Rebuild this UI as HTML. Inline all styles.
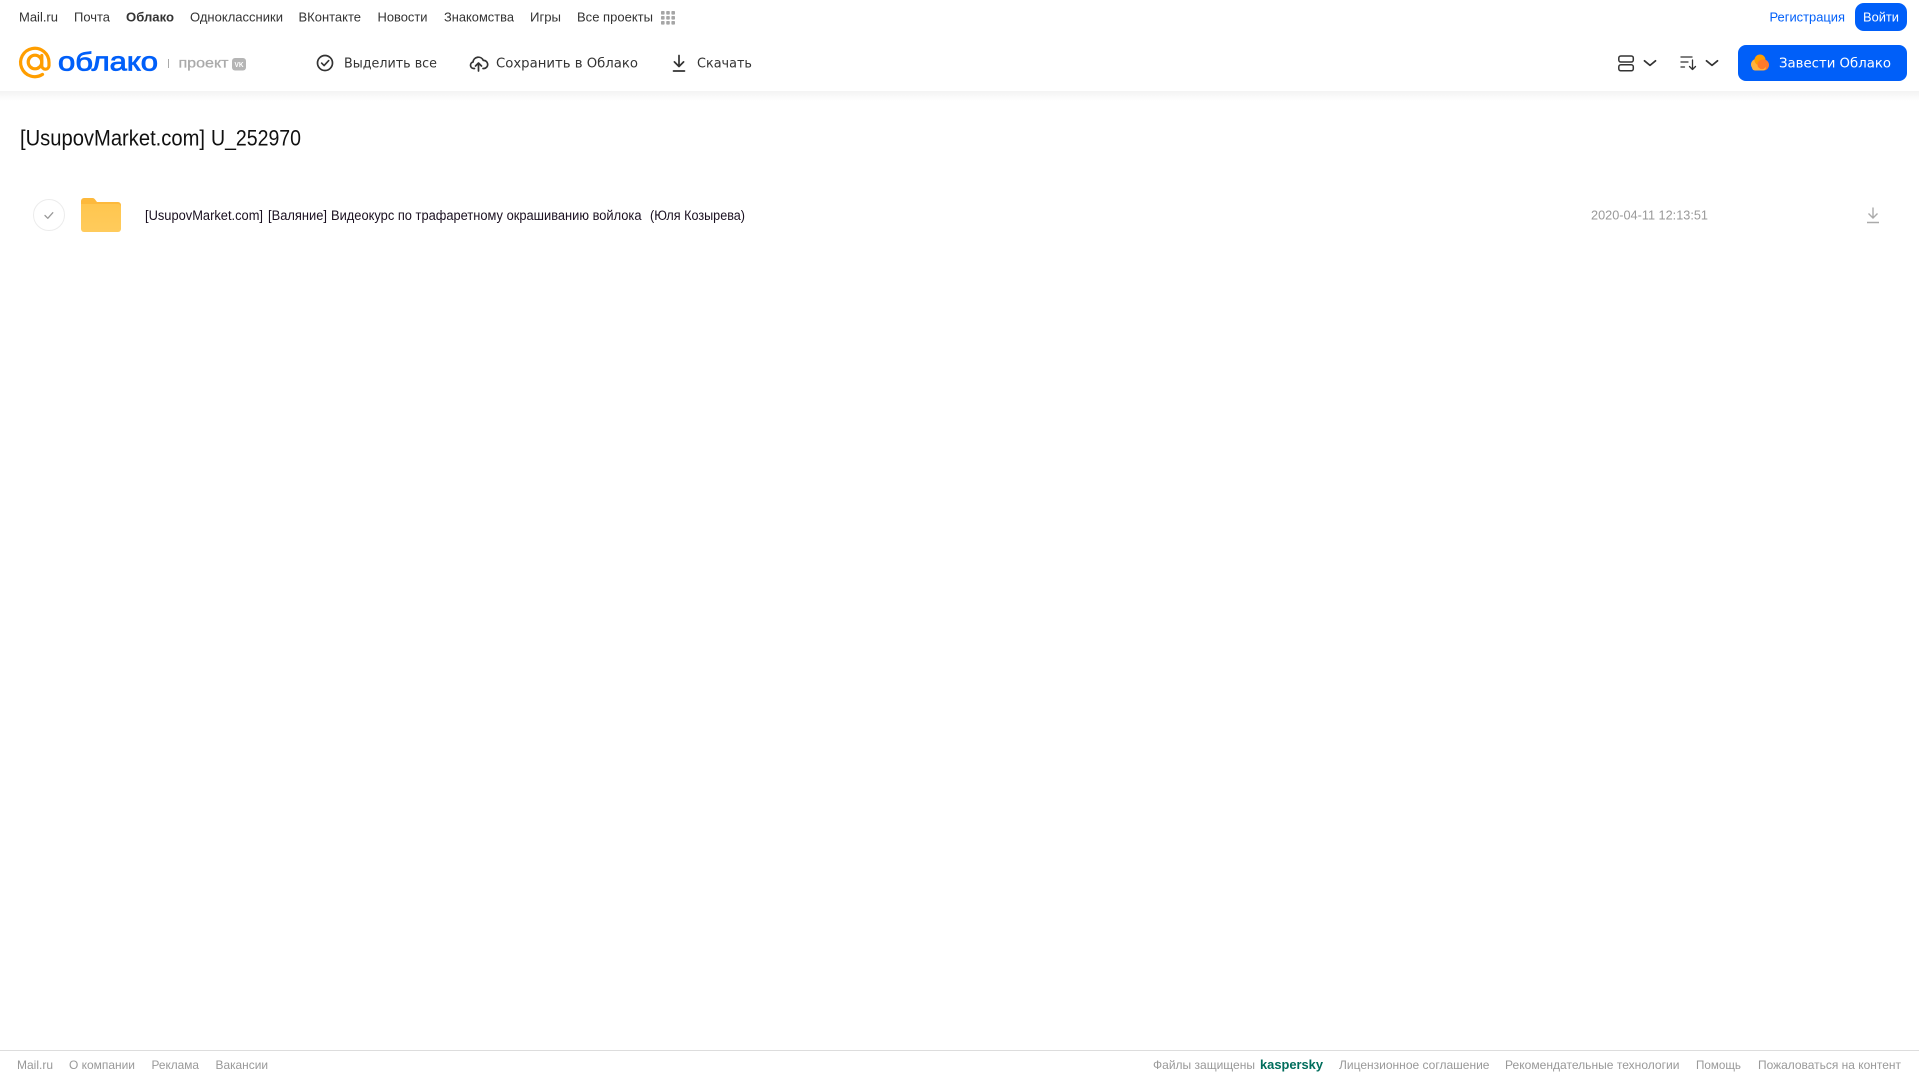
<!DOCTYPE html>
<html lang="ru">
<head>
<meta charset="utf-8">
<title>[UsupovMarket.com] U_252970</title>
<style>
html,body{margin:0;padding:0;background:#fff;width:1919px;height:1079px;overflow:hidden}
svg{display:block;position:absolute;left:0;top:0}
text{font-family:"Liberation Sans",Arial,sans-serif;white-space:pre}
.n{font-size:13px;fill:#333}
.a{font-family:"DejaVu Sans",sans-serif;font-size:13.5px;fill:#333}
.f{font-size:12px;fill:#999}
.r{font-size:13.5px;fill:#1a1020}
</style>
</head>
<body>
<svg width="1919" height="1079" viewBox="0 0 1919 1079" xmlns="http://www.w3.org/2000/svg">
<defs><linearGradient id="sh" x1="0" y1="0" x2="0" y2="1"><stop offset="0" stop-color="#f3f3f3"/><stop offset="1" stop-color="#fff"/></linearGradient>
<linearGradient id="fo" x1="0" y1="0" x2="0" y2="1"><stop offset="0" stop-color="#ffc64f"/><stop offset="1" stop-color="#ffcb5c"/></linearGradient></defs>
<rect x="0" y="91" width="1919" height="10" fill="url(#sh)"/>

<!-- top nav -->
<text class="n" x="19" y="21.5" textLength="39" lengthAdjust="spacingAndGlyphs">Mail.ru</text>
<text class="n" x="74" y="21.5" textLength="36" lengthAdjust="spacingAndGlyphs">Почта</text>
<text class="n" x="126" y="21.5" textLength="48" lengthAdjust="spacingAndGlyphs" font-weight="700">Облако</text>
<text class="n" x="190" y="21.5" textLength="93" lengthAdjust="spacingAndGlyphs">Одноклассники</text>
<text class="n" x="298.5" y="21.5" textLength="62.5" lengthAdjust="spacingAndGlyphs">ВКонтакте</text>
<text class="n" x="377.5" y="21.5" textLength="50" lengthAdjust="spacingAndGlyphs">Новости</text>
<text class="n" x="444" y="21.5" textLength="70" lengthAdjust="spacingAndGlyphs">Знакомства</text>
<text class="n" x="530" y="21.5" textLength="31" lengthAdjust="spacingAndGlyphs">Игры</text>
<text class="n" x="577" y="21.5" textLength="76" lengthAdjust="spacingAndGlyphs">Все проекты</text>
<g fill="#a6a6a6">
<rect x="661" y="11" width="3.6" height="3.6" rx=".8"/><rect x="666.2" y="11" width="3.6" height="3.6" rx=".8"/><rect x="671.4" y="11" width="3.6" height="3.6" rx=".8"/>
<rect x="661" y="16" width="3.6" height="3.6" rx=".8"/><rect x="666.2" y="16" width="3.6" height="3.6" rx=".8"/><rect x="671.4" y="16" width="3.6" height="3.6" rx=".8"/>
<rect x="661" y="21" width="3.6" height="3.6" rx=".8"/><rect x="666.2" y="21" width="3.6" height="3.6" rx=".8"/><rect x="671.4" y="21" width="3.6" height="3.6" rx=".8"/>
</g>
<text class="n" x="1769.5" y="21.5" textLength="75.5" lengthAdjust="spacingAndGlyphs" style="fill:#005ff9">Регистрация</text>
<rect x="1855" y="3" width="52" height="28" rx="9" fill="#005ff9"/>
<text class="n" x="1863" y="21.5" textLength="36" lengthAdjust="spacingAndGlyphs" style="fill:#fff">Войти</text>

<!-- logo -->
<g fill="none" stroke="#ff9e00" stroke-width="3.2" stroke-linecap="round">
<circle cx="35" cy="62" r="6.8"/>
<path d="M41.8 55.5V65.5a3.5 3.5 0 0 0 7.2 .2V62.5A14.2 14.2 0 1 0 42.5 74.4"/>
</g>
<text x="58" y="70.5" font-size="25.5" textLength="100" lengthAdjust="spacingAndGlyphs" fill="#005ff9" stroke="#005ff9" stroke-width=".8">облако</text>
<rect x="168" y="59" width="1" height="9" fill="#aaa"/>
<text x="178.5" y="67.5" font-size="14" textLength="50" lengthAdjust="spacingAndGlyphs" fill="#aaa" stroke="#aaa" stroke-width=".3">проект</text>
<rect x="232" y="58" width="14" height="12.5" rx="3" fill="#b5b5b5"/>
<text x="234.5" y="67" font-size="7.5" font-weight="700" fill="#fff" textLength="9" lengthAdjust="spacingAndGlyphs">VK</text>

<!-- actions -->
<circle cx="325" cy="63" r="7.5" fill="none" stroke="#333" stroke-width="1.7"/>
<path d="M321.6 63.1l2.5 2.5 4.6-5" fill="none" stroke="#333" stroke-width="1.6" stroke-linecap="round" stroke-linejoin="round"/>
<text class="a" x="344" y="67.5" textLength="93" lengthAdjust="spacingAndGlyphs">Выделить все</text>
<path d="M474.5 68.5h-.8a3.3 3.3 0 0 1-.7-6.5 5.4 5.4 0 0 1 10.3-1.6 3.9 3.9 0 0 1 .7 8.1h-1" fill="none" stroke="#333" stroke-width="1.7" stroke-linecap="round" stroke-linejoin="round"/>
<path d="M478.5 71v-8m-3 3l3-3 3 3" fill="none" stroke="#333" stroke-width="1.7" stroke-linecap="round" stroke-linejoin="round"/>
<text class="a" x="496" y="67.5" textLength="142" lengthAdjust="spacingAndGlyphs">Сохранить в Облако</text>
<path d="M679 55.5v11m-4.6-4.6l4.6 4.6 4.6-4.6M673.5 71h11" fill="none" stroke="#333" stroke-width="1.7" stroke-linecap="round" stroke-linejoin="round"/>
<text class="a" x="697" y="67.5" textLength="55" lengthAdjust="spacingAndGlyphs">Скачать</text>

<!-- right controls -->
<g fill="none" stroke="#333" stroke-width="1.5">
<rect x="1618.8" y="56" width="14.5" height="6" rx="2"/>
<rect x="1618.8" y="64.8" width="14.5" height="6" rx="2"/>
</g>
<path d="M1644.5 60.8l5.5 4.6 5.5-4.6M1706.5 60.8l5.5 4.6 5.5-4.6" fill="none" stroke="#333" stroke-width="1.7" stroke-linecap="round" stroke-linejoin="round"/>
<path d="M1681 57h11M1681 62h7M1681 67h3.5M1692.5 60v9.5m-3-3l3 3 3-3" fill="none" stroke="#333" stroke-width="1.3" stroke-linecap="round" stroke-linejoin="round"/>
<rect x="1738" y="45" width="169" height="36" rx="8" fill="#005ff9"/>
<circle cx="1756.5" cy="64.5" r="5.5" fill="#ffb23e"/>
<circle cx="1760" cy="60" r="5.5" fill="#ff9e00"/>
<circle cx="1763.5" cy="65" r="5.5" fill="#ff7a2a"/>
<rect x="1752" y="64.5" width="14" height="6" rx="3" fill="#ffb23e"/>
<circle cx="1762" cy="64.5" r="4.6" fill="#ff7a2a"/>
<text class="a" x="1779" y="67.5" textLength="112" lengthAdjust="spacingAndGlyphs" style="fill:#fff">Завести Облако</text>

<!-- title -->
<text x="20" y="145.5" font-size="22" textLength="185" lengthAdjust="spacingAndGlyphs" fill="#111">[UsupovMarket.com]</text>
<text x="211" y="145.5" font-size="22" textLength="90" lengthAdjust="spacingAndGlyphs" fill="#111">U_252970</text>

<!-- row -->
<circle cx="49" cy="215" r="15.5" fill="#fff" stroke="#ececec" stroke-width="1"/>
<path d="M45 215.5l2.8 2.8 5-5.6" fill="none" stroke="#999" stroke-width="1.3" stroke-linecap="round" stroke-linejoin="round"/>
<path d="M81 201a3 3 0 0 1 3-3h8.5a3 3 0 0 1 2.3 1.1l2.2 2.9h21a3 3 0 0 1 3 3v4H81z" fill="#fdb93c"/>
<path d="M81 204h37a3 3 0 0 1 3 3v22a3 3 0 0 1-3 3H84a3 3 0 0 1-3-3z" fill="url(#fo)"/>
<text class="r" x="145" y="220" textLength="118" lengthAdjust="spacingAndGlyphs">[UsupovMarket.com]</text>
<text class="r" x="268" y="220" textLength="59" lengthAdjust="spacingAndGlyphs">[Валяние]</text>
<text class="r" x="331" y="220" textLength="310.5" lengthAdjust="spacingAndGlyphs">Видеокурс по трафаретному окрашиванию войлока</text>
<text class="r" x="650" y="220" textLength="95" lengthAdjust="spacingAndGlyphs">(Юля Козырева)</text>
<text x="1591" y="219.5" font-size="13" textLength="117" lengthAdjust="spacingAndGlyphs" fill="#999">2020-04-11 12:13:51</text>
<path d="M1873 207.5v10.5m-4.5-4.5l4.5 4.5 4.5-4.5M1867 222.5h12" fill="none" stroke="#aaa" stroke-width="1.4"/>

<!-- footer -->
<rect x="0" y="1050" width="1919" height="1" fill="#ddd"/>
<text class="f" x="17" y="1069" textLength="36" lengthAdjust="spacingAndGlyphs">Mail.ru</text>
<text class="f" x="69" y="1069" textLength="66" lengthAdjust="spacingAndGlyphs">О компании</text>
<text class="f" x="151.5" y="1069" textLength="47.5" lengthAdjust="spacingAndGlyphs">Реклама</text>
<text class="f" x="215.5" y="1069" textLength="52.5" lengthAdjust="spacingAndGlyphs">Вакансии</text>
<text class="f" x="1153" y="1069" textLength="102" lengthAdjust="spacingAndGlyphs">Файлы защищены</text>
<text x="1260" y="1069" font-size="13" font-weight="700" textLength="63" lengthAdjust="spacingAndGlyphs" fill="#006d5c">kaspersky</text>
<text class="f" x="1339" y="1069" textLength="150.5" lengthAdjust="spacingAndGlyphs">Лицензионное соглашение</text>
<text class="f" x="1505" y="1069" textLength="174.5" lengthAdjust="spacingAndGlyphs">Рекомендательные технологии</text>
<text class="f" x="1696" y="1069" textLength="45" lengthAdjust="spacingAndGlyphs">Помощь</text>
<text class="f" x="1758" y="1069" textLength="143" lengthAdjust="spacingAndGlyphs">Пожаловаться на контент</text>
</svg>
</body>
</html>
